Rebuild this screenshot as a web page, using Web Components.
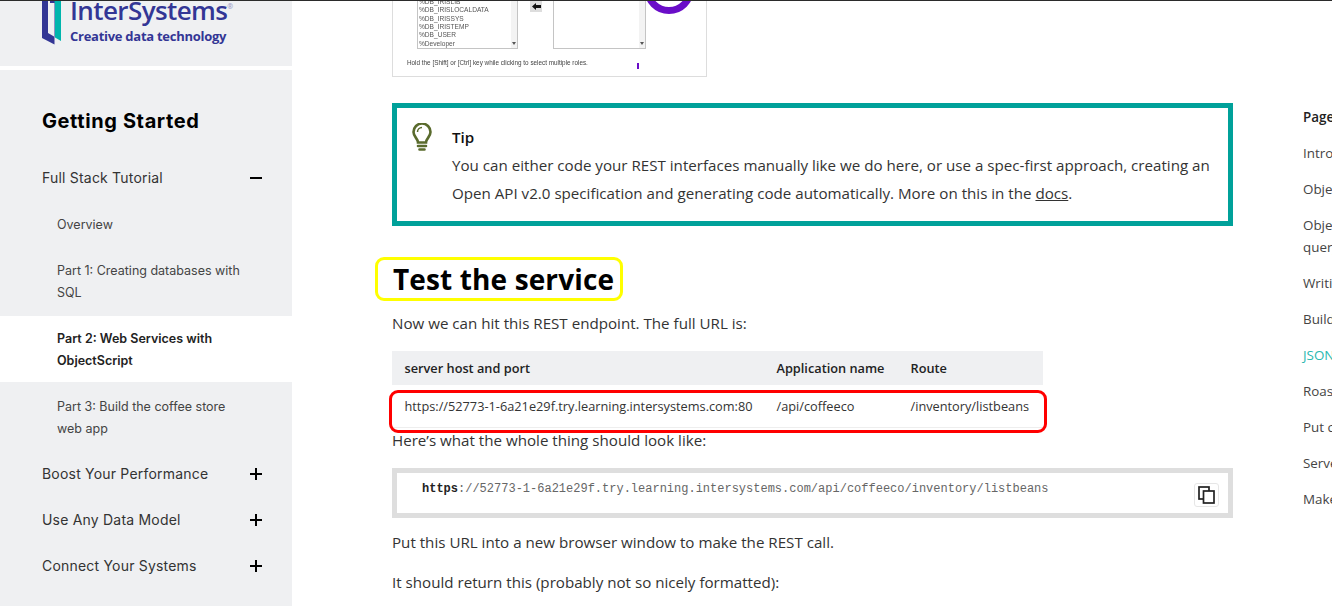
<!DOCTYPE html>
<html lang="en">
<head>
<meta charset="utf-8">
<title>Getting Started</title>
<style>
  html, body { margin: 0; height: 100%; overflow: hidden; background: #fff; }
  body { font-family: "Open Sans", "Liberation Sans", sans-serif; color: #333; }
</style>
</head>
<body>
<docs-page>
  <docs-sidebar slot="sidebar" heading="Getting Started">
    <nav-item kind="top" toggle="minus">Full Stack Tutorial</nav-item>
    <nav-item>Overview</nav-item>
    <nav-item>Part 1: Creating databases with SQL</nav-item>
    <nav-item active>Part 2: Web Services with ObjectScript</nav-item>
    <nav-item>Part 3: Build the coffee store web app</nav-item>
    <nav-item kind="top" toggle="plus">Boost Your Performance</nav-item>
    <nav-item kind="top" toggle="plus">Use Any Data Model</nav-item>
    <nav-item kind="top" toggle="plus">Connect Your Systems</nav-item>
  </docs-sidebar>

  <roles-figure></roles-figure>

  <tip-box>You can either code your REST interfaces manually like we do here, or use a spec-first approach, creating an Open API v2.0 specification and generating code automatically. More on this in the <a href="#docs">docs</a>.</tip-box>

  <section-heading>Test the service</section-heading>
  <body-text gap="8">Now we can hit this REST endpoint. The full URL is:</body-text>
  <endpoint-table></endpoint-table>
  <body-text gap="-2">Here’s what the whole thing should look like:</body-text>
  <code-block scheme="https" rest="://52773-1-6a21e29f.try.learning.intersystems.com/api/coffeeco/inventory/listbeans"></code-block>
  <body-text gap="10">Put this URL into a new browser window to make the REST call.</body-text>
  <body-text gap="12">It should return this (probably not so nicely formatted):</body-text>

  <page-toc slot="toc"></page-toc>
</docs-page>

<script>
class DocsPage extends HTMLElement {
  constructor() {
    super();
    this.attachShadow({ mode: 'open' });
    this.shadowRoot.innerHTML = `
      <style>
        :host { display: flex; width: 1332px; height: 606px; overflow: hidden; position: relative; }
        .topline { position: absolute; left: 0; right: 0; top: 0; height: 1px; background: #2b2b2b; z-index: 5; }
        .main { width: 841px; margin-left: 100px; flex: none; display: flex; flex-direction: column; }
        .toc { margin-left: 70px; flex: none; width: 220px; }
      </style>
      <div class="topline"></div>
      <slot name="sidebar"></slot>
      <div class="main"><slot></slot></div>
      <div class="toc"><slot name="toc"></slot></div>
    `;
  }
}

class DocsSidebar extends HTMLElement {
  constructor() {
    super();
    this.attachShadow({ mode: 'open' });
    this.shadowRoot.innerHTML = `
      <style>
        :host { display: flex; flex-direction: column; gap: 4px; width: 292px; flex: none; height: 606px; font-family: Inter, "Liberation Sans", sans-serif; }
        .brand { height: 66px; background: #eff0f2; display: flex; gap: 9px; padding-left: 42px; box-sizing: border-box; overflow: hidden; }
        .brand svg { flex: none; }
        .word { font-family: "Open Sans", "Liberation Sans", sans-serif; color: #333695; font-weight: 600; font-size: 26px; line-height: 26px; margin-top: -3px; letter-spacing: -0.6px; white-space: nowrap; }
        .word sup { font-size: 7px; color: #9a9cc8; vertical-align: 11px; line-height: 0; letter-spacing: 0; }
        .tag { color: #333695; font-weight: 700; font-size: 13px; line-height: 16px; margin-top: 5px; letter-spacing: -0.27px; font-family: "Open Sans", "Liberation Sans", sans-serif; white-space: nowrap; }
        .panel { flex: 1; background: #eff0f2; padding-top: 39px; display: flex; flex-direction: column; }
        h2 { margin: 0 0 23px 42px; font-size: 20px; line-height: 24px; font-weight: 700; color: #000; letter-spacing: 0.6px; }
        .items { display: flex; flex-direction: column; gap: 2px; }
      </style>
      <div class="brand">
        <svg width="19" height="45" viewBox="0 0 19 45">
          <path fill="#00b5ad" d="M8 0H19V41L13 37.5V3H8Z"/>
          <path fill="#333695" d="M0 0H6V33L12 36.5V3H8V0H12.5V44.5L0 38Z"/>
        </svg>
        <div>
          <div class="word">InterSystems<sup>®</sup></div>
          <div class="tag">Creative data technology</div>
        </div>
      </div>
      <div class="panel">
        <h2></h2>
        <div class="items"><slot></slot></div>
      </div>
    `;
  }
  connectedCallback() {
    this.shadowRoot.querySelector('h2').textContent = this.getAttribute('heading');
  }
}

class NavItem extends HTMLElement {
  constructor() {
    super();
    this.attachShadow({ mode: 'open' });
    this.shadowRoot.innerHTML = `
      <style>
        :host { display: flex; align-items: center; justify-content: space-between; box-sizing: border-box; padding: 12px 30px 10px 57px; font-size: 12.5px; line-height: 22px; color: #444; }
        :host([kind="top"]) { padding: 11px 30px 11px 42px; font-size: 14px; letter-spacing: 0.2px; color: #333; }
        :host([active]) { background: #fff; font-weight: 600; color: #222; }
        svg { flex: none; display: block; }
        .text { width: 190px; }
        :host([kind="top"]) .text { width: auto; }
      </style>
      <span class="text"><slot></slot></span>
      <span class="toggle"></span>
    `;
  }
  connectedCallback() {
    const toggle = this.getAttribute('toggle');
    if (!toggle) return;
    const vertical = toggle === 'plus' ? '<rect x="5" y="0" width="2" height="12"/>' : '';
    this.shadowRoot.querySelector('.toggle').innerHTML =
      `<svg width="12" height="12" viewBox="0 0 12 12" fill="#000"><rect x="0" y="5" width="12" height="2"/>${vertical}</svg>`;
  }
}

class RolesFigure extends HTMLElement {
  constructor() {
    super();
    this.attachShadow({ mode: 'open' });
    this.shadowRoot.innerHTML = `
      <style>
        :host { display: block; position: relative; box-sizing: border-box; width: 315px; height: 77px; border: 1px solid #ddd; border-top: 0; overflow: hidden; font-family: "Liberation Sans", sans-serif; font-size: 6.6px; color: #555; }
        .row { display: flex; align-items: flex-start; margin-left: 24px; height: 49px; filter: blur(0.25px); }
        .list { box-sizing: border-box; width: 101px; height: 49px; border: 1px solid #c4c4c4; border-top: 0; padding: 0 0 0 1px; display: flex; flex-direction: column; justify-content: flex-end; line-height: 8.35px; position: relative; }
        .list.right { width: 93px; margin-left: 11px; }
        .bar { position: absolute; top: 0; right: 0; bottom: 0; width: 6px; background: #f3f3f3; }
        .bar::after { content: ""; position: absolute; left: 1px; bottom: 3px; border: 2px solid transparent; border-top: 3px solid #555; border-bottom: 0; }
        .btn { width: 12px; height: 12px; margin-left: 12px; background: #ddd; flex: none; display: flex; justify-content: center; align-items: center; }
        .caption { margin: 9px 0 0 14px; line-height: 9px; font-size: 6.35px; color: #444; white-space: nowrap; filter: blur(0.25px); }
        .ring { position: absolute; left: 251px; top: -36px; width: 50px; height: 50px; box-sizing: border-box; border: 7px solid #6a0dc8; border-radius: 50%; }
        .tick { position: absolute; left: 244px; top: 63px; width: 2px; height: 6px; background: #6a0dc8; }
      </style>
      <div class="row">
        <div class="list">
          <span>%DB_IRISLIB</span><span>%DB_IRISLOCALDATA</span><span>%DB_IRISSYS</span><span>%DB_IRISTEMP</span><span>%DB_USER</span><span>%Developer</span>
          <span class="bar"></span>
        </div>
        <div class="btn"><svg width="9" height="7" viewBox="0 0 9 7"><path d="M0 3.5L4 0V2H9V5H4V7Z" fill="#111"/></svg></div>
        <div class="list right"><span class="bar"></span></div>
      </div>
      <div class="caption">Hold the [Shift] or [Ctrl] key while clicking to select multiple roles.</div>
      <div class="ring"></div>
      <div class="tick"></div>
    `;
  }
}

class TipBox extends HTMLElement {
  constructor() {
    super();
    this.attachShadow({ mode: 'open' });
    this.shadowRoot.innerHTML = `
      <style>
        :host { display: flex; box-sizing: border-box; height: 123px; margin-top: 26px; border: 5px solid #00a19a; padding: 15px 14px 0 15px; font-size: 15.15px; line-height: 28px; color: #333; }
        svg { flex: none; margin-right: 20px; }
        .title { color: #111; font-weight: 600; }
        ::slotted(a) { color: #333; }
      </style>
      <svg width="20" height="28" viewBox="0 0 20 28" fill="none" stroke="#5a6b2d" stroke-width="2.6">
        <path d="M6 19.5C6 15.5 1.5 14 1.5 9A8.5 8.5 0 0 1 18.5 9C18.5 14 14 15.5 14 19.5Z"/>
        <path d="M6 23H14M7.5 26.5H12.5" stroke-linecap="round"/>
        <path d="M5.5 9A4.5 4.5 0 0 1 10 4.5" stroke-width="1.5"/>
      </svg>
      <div><div class="title">Tip</div><slot></slot></div>
    `;
  }
}

class SectionHeading extends HTMLElement {
  constructor() {
    super();
    this.attachShadow({ mode: 'open' });
    this.shadowRoot.innerHTML = `
      <style>
        :host { display: block; position: relative; margin-top: 31px; padding-left: 1px; font-size: 28px; line-height: 44px; font-weight: 700; letter-spacing: 0.13px; color: #000; }
        .mark { position: absolute; left: -17px; top: 0; width: 248px; height: 44px; box-sizing: border-box; border: 3px solid #ffff00; border-radius: 9px; }
      </style>
      <slot></slot>
      <div class="mark"></div>
    `;
  }
}

class BodyText extends HTMLElement {
  constructor() {
    super();
    this.attachShadow({ mode: 'open' });
    this.shadowRoot.innerHTML = `
      <style>
        :host { display: block; font-size: 15.15px; line-height: 28px; color: #333; }
      </style>
      <slot></slot>
    `;
  }
  connectedCallback() {
    this.style.marginTop = (this.getAttribute('gap') || 0) + 'px';
  }
}

class EndpointTable extends HTMLElement {
  constructor() {
    super();
    this.attachShadow({ mode: 'open' });
    this.shadowRoot.innerHTML = `
      <style>
        :host { display: block; position: relative; width: 651px; margin-top: 14px; font-size: 12.75px; color: #333; }
        table { border-collapse: collapse; width: 651px; table-layout: fixed; }
        th, td { text-align: left; padding: 0 0 0 11.5px; white-space: nowrap; }
        th:first-child, td:first-child { padding-left: 12.5px; }
        th { background: #eff0f2; height: 34px; font-weight: 600; color: #222; }
        td { height: 42px; border-bottom: 1px solid #eee; }
        .mark { position: absolute; left: -3px; top: 39px; width: 658px; height: 43px; box-sizing: border-box; border: 3px solid #ff0000; border-radius: 9px; }
      </style>
      <table>
        <colgroup><col style="width:373px"><col style="width:134px"><col style="width:144px"></colgroup>
        <tr><th>server host and port</th><th>Application name</th><th>Route</th></tr>
        <tr><td>https://52773-1-6a21e29f.try.learning.intersystems.com:80</td><td>/api/coffeeco</td><td>/inventory/listbeans</td></tr>
      </table>
      <div class="mark"></div>
    `;
  }
}

class CodeBlock extends HTMLElement {
  constructor() {
    super();
    this.attachShadow({ mode: 'open' });
    this.shadowRoot.innerHTML = `
      <style>
        :host { display: flex; position: relative; box-sizing: border-box; height: 50px; margin-top: 14px; border: 5px solid #dedede; padding: 6px 0 0 25px; font-family: "Liberation Mono", monospace; font-size: 12px; line-height: 20px; color: #666; white-space: pre; }
        b { color: #222; }
        .copy { position: absolute; right: 9px; top: 10px; width: 25px; height: 24px; box-sizing: border-box; border: 1px solid #e6e6e6; border-radius: 3px; background: #fff; display: flex; align-items: center; justify-content: center; }
      </style>
      <span><b></b><span class="rest"></span></span>
      <span class="copy">
        <svg width="17" height="18" viewBox="0 0 17 18" fill="#fff" stroke="#222" stroke-width="1.7">
          <rect x="1" y="1" width="10" height="12"/>
          <rect x="5.5" y="5" width="10.5" height="12"/>
        </svg>
      </span>
    `;
  }
  connectedCallback() {
    this.shadowRoot.querySelector('b').textContent = this.getAttribute('scheme');
    this.shadowRoot.querySelector('.rest').textContent = this.getAttribute('rest');
  }
}

class PageToc extends HTMLElement {
  constructor() {
    super();
    this.attachShadow({ mode: 'open' });
    this.shadowRoot.innerHTML = `
      <style>
        :host { display: flex; flex-direction: column; gap: 14px; padding-top: 106px; font-size: 13.4px; line-height: 22px; color: #444; }
        .head { font-weight: 600; color: #222; }
        .on { color: #29b8b0; }
      </style>
      <div class="head">Page contents</div>
      <div>Introduction</div>
      <div>Object classes</div>
      <div>Object classes and<br>query</div>
      <div>Writing methods</div>
      <div>Building the service</div>
      <div class="on">JSON output</div>
      <div>Roasting beans</div>
      <div>Put coffee in bags</div>
      <div>Serve the coffee</div>
      <div>Make a sale</div>
    `;
  }
}

customElements.define('docs-page', DocsPage);
customElements.define('docs-sidebar', DocsSidebar);
customElements.define('nav-item', NavItem);
customElements.define('roles-figure', RolesFigure);
customElements.define('tip-box', TipBox);
customElements.define('section-heading', SectionHeading);
customElements.define('body-text', BodyText);
customElements.define('endpoint-table', EndpointTable);
customElements.define('code-block', CodeBlock);
customElements.define('page-toc', PageToc);
</script>
</body>
</html>
